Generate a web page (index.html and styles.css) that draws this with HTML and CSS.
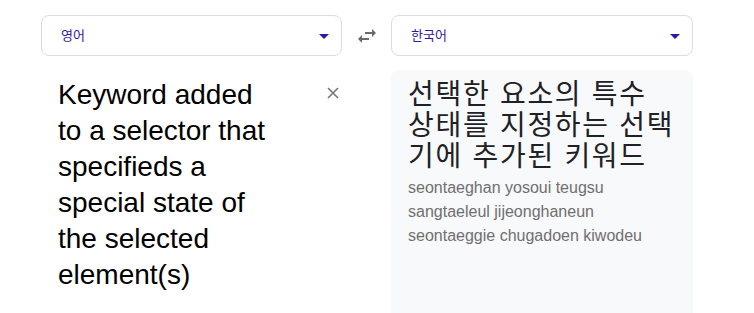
FILE: index.html
```html
<!DOCTYPE html>
<html lang="ko">

<head>
    <meta charset="UTF-8">
    <meta name="viewport" content="width=device-width, initial-scale=1.0">
    <title>번역</title>
    <link rel="stylesheet" href="styles.css">
</head>

<body>
    <div class=translator>
        <div class=select>
            <span class=lang>영어</span>
            <span class=caret></span>
        </div>
        <div class=swap>
            <svg width="24" height="24" viewBox="0 0 24 24">
                <path d="M6.99 11L3 15l3.99 4v-3H14v-2H6.99v-3zM21 9l-3.99-4v3H10v2h7.01v3L21 9z" fill="#6b6b6b" />
            </svg>
        </div>
        <div class=select>
            <span class=lang>한국어</span>
            <span class=caret></span>
        </div>

        <div class=source>
            <div class=source-text>Keyword added to a selector that specifieds a special state of the selected element(s)</div>
            <div class=clear>
                <svg width="12" height="12" viewBox="0 0 12 12">
                    <path d="M1 1L11 11M11 1L1 11" stroke="#73777b" stroke-width="1.6" />
                </svg>
            </div>
        </div>
        <div class=gap></div>
        <div class=target>
            <div class=target-text>선택한 요소의 특수 상태를 지정하는 선택기에 추가된 키워드</div>
            <div class=romanized>seontaeghan yosoui teugsu sangtaeleul jijeonghaneun seontaeggie chugadoen kiwodeu</div>
        </div>
    </div>
</body>

</html>
```

FILE: styles.css
```css
html,
body {
    margin: 0;
    overflow: hidden;
    background-color: white;
}

.translator {
    display: grid;
    grid-template-columns: 301px 49px 302px;
    grid-template-rows: 41px 243px;
    row-gap: 14px;
    padding-top: 15px;
    padding-left: 41px;
}

.select {
    display: flex;
    align-items: center;
    justify-content: space-between;
    border: 1px solid #dadce0;
    border-radius: 8px;
    padding-left: 19px;
    padding-right: 12px;
}

.lang {
    font-family: "Noto Sans CJK KR", "Liberation Sans", sans-serif;
    font-size: 13px;
    color: #2d1aa5;
    margin-top: -3px;
}

.caret {
    width: 0;
    height: 0;
    border-left: 5px solid transparent;
    border-right: 5px solid transparent;
    border-top: 5px solid #2d1aa5;
    margin-top: 2px;
}

.swap {
    display: flex;
    align-items: center;
    justify-content: center;
    padding-left: 1px;
}

.swap svg {
    display: block;
}

.source {
    display: flex;
    padding: 7px 3px 0 17px;
}

.source-text {
    width: 216px;
    font-family: "Liberation Sans", Arial, sans-serif;
    font-size: 28px;
    line-height: 36px;
    color: #000;
}

.clear {
    margin-left: auto;
    margin-top: 10px;
}

.clear svg {
    display: block;
}

.target {
    background-color: #f8f9fa;
    border-radius: 8px 8px 0 0;
    padding: 7px 18px 0 17px;
}

.target-text {
    font-family: "Noto Sans CJK KR", "Liberation Sans", sans-serif;
    font-size: 28px;
    line-height: 31px;
    letter-spacing: 1.7px;
    color: #202124;
}

.romanized {
    margin-top: 6px;
    font-family: "Liberation Sans", Arial, sans-serif;
    font-size: 16px;
    line-height: 24px;
    color: #6f6f6f;
}
```
